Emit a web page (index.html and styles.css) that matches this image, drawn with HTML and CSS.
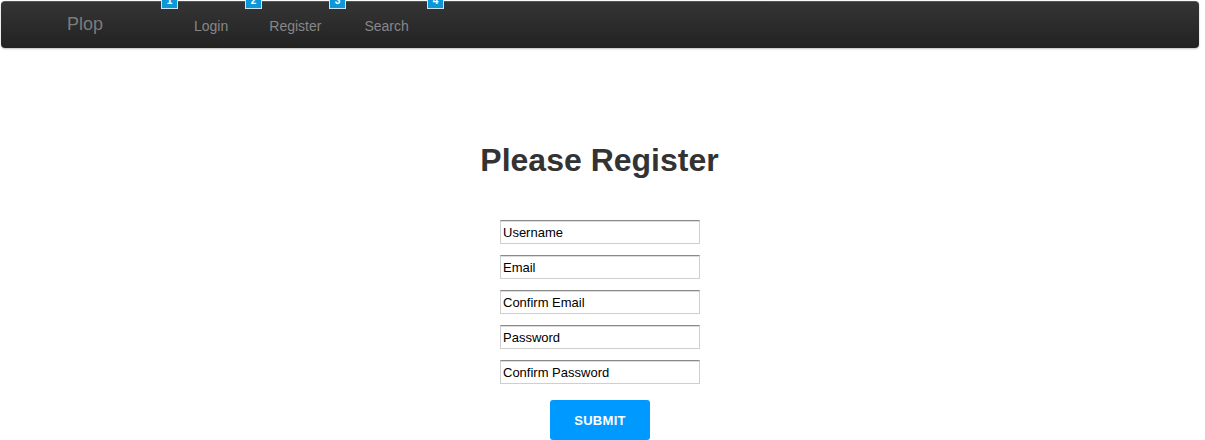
FILE: index.html
```html
<!DOCTYPE html>
<html>
<head>
<meta charset="utf-8">
<title>Plop - Register</title>
<link rel="stylesheet" href="styles.css">
</head>
<body>
<header class="navbar">
  <a class="brand" href="#">Plop</a>
  <nav class="nav">
    <a class="nav-link" href="#">Login</a>
    <a class="nav-link" href="#">Register</a>
    <a class="nav-link nav-link-last" href="#">Search</a>
  </nav>
</header>
<div class="badges">
  <span class="badge badge-1">1</span>
  <span class="badge badge-2">2</span>
  <span class="badge badge-3">3</span>
  <span class="badge badge-4">4</span>
</div>
<main class="content">
  <h1 class="title">Please Register</h1>
  <form class="form">
    <input class="field" type="text" value="Username">
    <input class="field" type="text" value="Email">
    <input class="field" type="text" value="Confirm Email">
    <input class="field" type="text" value="Password">
    <input class="field" type="text" value="Confirm Password">
    <button class="submit" type="button">SUBMIT</button>
  </form>
</main>
</body>
</html>
```
FILE: styles.css
```css
html, body {
  margin: 0;
  padding: 0;
  background: #fff;
  font-family: "Liberation Sans", Arial, sans-serif;
}

.navbar {
  display: flex;
  align-items: center;
  height: 47px;
  margin: 1px 6px 0 1px;
  box-sizing: border-box;
  border-radius: 4px;
  border-top: 1px solid #555;
  background: linear-gradient(to bottom, #353535, #222222);
  box-shadow: 0 1px 2px rgba(0, 0, 0, 0.25);
}

.brand {
  width: 173px;
  box-sizing: border-box;
  padding-left: 66px;
  font-size: 18px;
  color: #7c7c7c;
  text-decoration: none;
  line-height: 20px;
  margin-top: -2px;
}

.nav {
  display: flex;
  margin-top: 2px;
}

.nav-link {
  padding: 10px 20px;
  font-size: 14px;
  color: #878787;
  text-decoration: none;
  line-height: 18px;
}

.nav-link + .nav-link {
  margin-left: 1px;
}

.nav-link-last {
  margin-left: 3px !important;
}

.badges {
  position: absolute;
  top: 0;
  left: 0;
}

.badge {
  position: absolute;
  top: -8px;
  width: 15px;
  height: 15px;
  border: 1px solid #cfe6f2;
  background: #0c98d8;
  color: #fff;
  font-size: 10px;
  font-weight: bold;
  line-height: 15px;
  text-align: center;
}

.badge-1 { left: 161px; }
.badge-2 { left: 245px; }
.badge-3 { left: 329px; }
.badge-4 { left: 427px; }

.content {
  display: flex;
  flex-direction: column;
  align-items: center;
  width: 1199px;
}

.title {
  margin: 94px 0 0;
  font-size: 32px;
  line-height: 37px;
  font-weight: bold;
  color: #333;
}

.form {
  display: flex;
  flex-direction: column;
  align-items: center;
  gap: 11px;
  margin-top: 41px;
  padding-left: 1px;
}

.field {
  width: 200px;
  height: 24px;
  box-sizing: border-box;
  margin: 0;
  padding: 0 2px;
  border: 1px solid #cfcfcf;
  border-top: 1px solid #8a8a8a;
  box-shadow: inset 0 1px 0 #dcdcdc;
  font-family: "Liberation Sans", Arial, sans-serif;
  font-size: 13px;
  color: #000;
  background: #fff;
}

.submit {
  width: 100px;
  height: 40px;
  margin-top: 5px;
  border: none;
  border-radius: 3px;
  background: #0099ff;
  color: #fff;
  font-family: "Liberation Sans", Arial, sans-serif;
  font-size: 13px;
  font-weight: bold;
  letter-spacing: 0.3px;
}
```
